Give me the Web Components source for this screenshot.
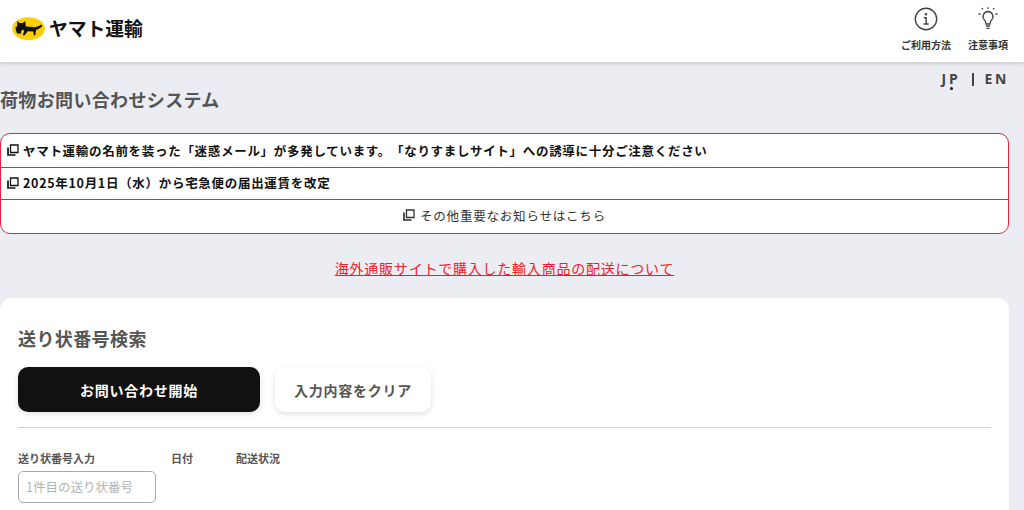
<!DOCTYPE html>
<html lang="ja">
<head>
<meta charset="utf-8">
<title>荷物お問い合わせシステム</title>
<style>
html, body { margin: 0; height: 510px; overflow: hidden; }
body {
  background: #ecedf2;
  font-family: "Noto Sans CJK JP", "Noto Sans", sans-serif;
  color: #111;
  text-spacing-trim: space-all;
}
</style>
</head>
<body>
<site-header></site-header>
<lang-switch></lang-switch>
<page-main>
  <h1 slot="title">荷物お問い合わせシステム</h1>
  <notice-box>
    <notice-row>ヤマト運輸の名前を装った「迷惑メール」が多発しています。「なりすましサイト」への誘導に十分ご注意ください</notice-row>
    <notice-row>2025年10月1日（水）から宅急便の届出運賃を改定</notice-row>
    <notice-row center>その他重要なお知らせはこちら</notice-row>
  </notice-box>
  <a slot="link" href="#">海外通販サイトで購入した輸入商品の配送について</a>
  <search-card slot="card"></search-card>
</page-main>

<script>
const ICON_COPY = `<svg width="12" height="12" viewBox="0 0 12 12" fill="none" stroke="currentColor" stroke-width="1.300"><path d="M3.500 1h7.500v7.500H3.500z"/><path d="M1 3.500V11h7.500" stroke-width="1.700"/></svg>`;

class SiteHeader extends HTMLElement {
  constructor() {
    super();
    this.attachShadow({ mode: "open" }).innerHTML = `
<style>
:host {
  display: flex;
  justify-content: space-between;
  height: 62px;
  padding: 0 10px 0 12px;
  background: #fff;
  box-shadow: 0 1px 4px rgba(0,0,0,.2);
  position: relative;
}
.logo { display: flex; align-items: center; gap: 4px; padding-bottom: 5px; }
.name { font-size: 18.800px; font-weight: 700; color: #111; line-height: 1; }
nav { display: flex; gap: 10px; padding-top: 7px; }
.item { display: flex; flex-direction: column; align-items: center; gap: 7px; font-size: 10px; font-weight: 700; color: #333; width: 52px; white-space: nowrap; line-height: 14px; }
.item svg { display: block; }
.item:first-child svg { margin-left: -1px; }
</style>
<div class="logo">
  <svg width="33" height="24" viewBox="0 0 33 24">
    <ellipse cx="16.500" cy="11.700" rx="16.300" ry="11.500" fill="#fbd000"/>
    <path d="M5.200 4l2.500 2h3.100l2.400-2 .6 5.500 7 .6c3 .2 5.200-.4 8.600-2.500l1 1.300c-2 2-4.500 3.500-6.300 4.100l-.8 5.300h-1.600l-.3-3.800-5.700-.2-3 4h-2l1.500-4.500-1.600-1.200-1.800 2.200.6 1.800H5l-1-3.400-.6-2.500 1.800-1.600z" fill="#111"/>
  </svg>
  <span class="name">ヤマト運輸</span>
</div>
<nav>
  <div class="item">
    <svg width="24" height="24" viewBox="0 0 24 24" fill="none" stroke="#444"><circle cx="12" cy="12" r="10.700" stroke-width="1.400"/><circle cx="12" cy="7.200" r="1.200" fill="#444" stroke="none"/><path d="M9.800 10.700h2.400v6.300M9.500 17h5.200" stroke-width="1.400"/></svg>
    <span>ご利用方法</span>
  </div>
  <div class="item">
    <svg width="24" height="24" viewBox="0 0 24 24" fill="none" stroke="#444" stroke-width="1.300"><path d="M12 4.500a5 5 0 0 0-3.400 8.600c.9 1 1.200 2.200 1.400 3.900h4c.2-1.700.5-2.900 1.400-3.900A5 5 0 0 0 12 4.500z"/><path d="M10 19h4M10.500 21.300h3M12 .2v1.800M6 1l.9 1.400M18 1l-.9 1.400M2.500 7h2M19.500 7h2"/></svg>
    <span>注意事項</span>
  </div>
</nav>`;
  }
}

class LangSwitch extends HTMLElement {
  constructor() {
    super();
    this.attachShadow({ mode: "open" }).innerHTML = `
<style>
:host {
  display: flex;
  justify-content: flex-end;
  align-items: center;
  height: 20px;
  margin-top: 7px;
  padding-right: 15px;
  font-family: "Open Sans", "Noto Sans", sans-serif;
  font-size: 14px;
  font-weight: 700;
  letter-spacing: 2.700px;
  color: #444;
  line-height: 20px;
}
.jp { position: relative; }
.jp::after { content: ""; position: absolute; left: 8px; bottom: -1px; width: 3px; height: 3px; border-radius: 50%; background: #111; }
.bar { width: 2px; height: 13px; background: #444; margin: 0 10px 0 12px; }
</style>
<span class="jp">JP</span><span class="bar"></span><span>EN</span>`;
  }
}

class PageMain extends HTMLElement {
  constructor() {
    super();
    this.attachShadow({ mode: "open" }).innerHTML = `
<style>
:host { display: block; padding-right: 15px; }
::slotted(h1) {
  margin: 0 0 16px;
  height: 28px;
  font-size: 18px;
  font-weight: 700;
  line-height: 20px;
  letter-spacing: .35px;
  color: #555;
}
.link { text-align: center; height: 64px; padding-top: 21px; box-sizing: border-box; line-height: 24px; }
::slotted(a) { color: #f01c2c; font-size: 14px; letter-spacing: .78px; text-decoration: underline; }
</style>
<slot name="title"></slot>
<slot></slot>
<div class="link"><slot name="link"></slot></div>
<slot name="card"></slot>`;
  }
}

class NoticeBox extends HTMLElement {
  constructor() {
    super();
    this.attachShadow({ mode: "open" }).innerHTML = `
<style>
:host {
  display: block;
  background: #fff;
  border: 1px solid #e8233f;
  border-radius: 10px;
  overflow: hidden;
}
</style>
<slot></slot>`;
  }
}

class NoticeRow extends HTMLElement {
  constructor() {
    super();
    this.attachShadow({ mode: "open" }).innerHTML = `
<style>
:host {
  display: flex;
  align-items: center;
  gap: 4px;
  box-sizing: border-box;
  height: 32px;
  padding: 0 0 2px 6px;
  font-size: 12.500px;
  font-weight: 700;
  letter-spacing: .7px;
  color: #111;
  border-bottom: 1px solid #e8233f;
}
:host(:first-child) { height: 34px; padding-bottom: 1px; }
:host(:last-child) { border-bottom: 0; height: 33px; padding-bottom: 3px; }
:host([center]) { justify-content: center; font-weight: 400; color: #333; padding-left: 0; gap: 5px; letter-spacing: .8px; }
svg { flex: none; }
</style>
${ICON_COPY}<span><slot></slot></span>`;
  }
}

class SearchCard extends HTMLElement {
  constructor() {
    super();
    this.attachShadow({ mode: "open" }).innerHTML = `
<style>
:host {
  display: block;
  background: #fff;
  border-radius: 12px 12px 0 0;
  padding: 26px 18px 0;
  height: 212px;
  box-sizing: border-box;
}
h2 { margin: 0 0 15px; font-size: 18px; font-weight: 700; line-height: 28px; letter-spacing: .4px; color: #555; }
.actions { display: flex; gap: 15px; padding-bottom: 15px; border-bottom: 1px solid #d4d4d4; }
button {
  font: inherit;
  font-size: 14px;
  font-weight: 700;
  letter-spacing: .75px;
  height: 45px;
  border: 0;
  border-radius: 10px;
  box-shadow: 0 2px 6px rgba(0,0,0,.12);
  padding: 0;
}
.primary { width: 242px; background: #111; color: #fff; }
.clear { width: 156px; background: #fff; color: #555; }
.fields { display: flex; gap: 39px; padding-top: 22px; }
label { display: block; font-size: 11px; font-weight: 700; color: #555; line-height: 16px; }
.box {
  margin-top: 5px;
  width: 138px;
  height: 32px;
  box-sizing: border-box;
  border: 1px solid #aaa;
  border-radius: 5px;
  padding-left: 7px;
  font-size: 12.500px;
  line-height: 30px;
  color: #b4b4b4;
}
.date { margin-left: -24px; }
.status { margin-left: 4px; }
</style>
<h2>送り状番号検索</h2>
<div class="actions">
  <button class="primary">お問い合わせ開始</button>
  <button class="clear">入力内容をクリア</button>
</div>
<div class="fields">
  <div><label>送り状番号入力</label><div class="box">1件目の送り状番号</div></div>
  <label class="date">日付</label>
  <label class="status">配送状況</label>
</div>`;
  }
}

customElements.define("site-header", SiteHeader);
customElements.define("lang-switch", LangSwitch);
customElements.define("page-main", PageMain);
customElements.define("notice-box", NoticeBox);
customElements.define("notice-row", NoticeRow);
customElements.define("search-card", SearchCard);
</script>
</body>
</html>
